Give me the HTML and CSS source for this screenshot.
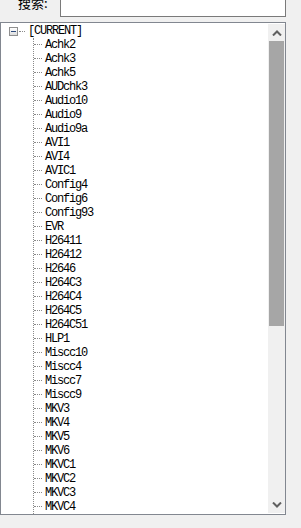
FILE: index.html
```html
<!DOCTYPE html>
<html>
<head>
<meta charset="utf-8">
<link rel="stylesheet" href="styles.css">
</head>
<body>
<div class="page">
  <div class="searchbar">
    <span class="search-label">搜索:</span>
    <div class="search-input"></div>
  </div>
  <div class="tree">
    <div class="tree-content">
      <div class="root-row">
        <span class="expander"><span class="minus"></span></span>
        <span class="hdot root-dot"></span>
        <span class="label">[CURRENT]</span>
      </div>
      <ul class="children">
        <li><span class="hdot"></span>Achk2</li>
        <li><span class="hdot"></span>Achk3</li>
        <li><span class="hdot"></span>Achk5</li>
        <li><span class="hdot"></span>AUDchk3</li>
        <li><span class="hdot"></span>Audio10</li>
        <li><span class="hdot"></span>Audio9</li>
        <li><span class="hdot"></span>Audio9a</li>
        <li><span class="hdot"></span>AVI1</li>
        <li><span class="hdot"></span>AVI4</li>
        <li><span class="hdot"></span>AVIC1</li>
        <li><span class="hdot"></span>Config4</li>
        <li><span class="hdot"></span>Config6</li>
        <li><span class="hdot"></span>Config93</li>
        <li><span class="hdot"></span>EVR</li>
        <li><span class="hdot"></span>H26411</li>
        <li><span class="hdot"></span>H26412</li>
        <li><span class="hdot"></span>H2646</li>
        <li><span class="hdot"></span>H264C3</li>
        <li><span class="hdot"></span>H264C4</li>
        <li><span class="hdot"></span>H264C5</li>
        <li><span class="hdot"></span>H264C51</li>
        <li><span class="hdot"></span>HLP1</li>
        <li><span class="hdot"></span>Miscc10</li>
        <li><span class="hdot"></span>Miscc4</li>
        <li><span class="hdot"></span>Miscc7</li>
        <li><span class="hdot"></span>Miscc9</li>
        <li><span class="hdot"></span>MKV3</li>
        <li><span class="hdot"></span>MKV4</li>
        <li><span class="hdot"></span>MKV5</li>
        <li><span class="hdot"></span>MKV6</li>
        <li><span class="hdot"></span>MKVC1</li>
        <li><span class="hdot"></span>MKVC2</li>
        <li><span class="hdot"></span>MKVC3</li>
        <li><span class="hdot"></span>MKVC4</li>
        <li><span class="hdot"></span>MPAC1</li>
      </ul>
    </div>
    <div class="scrollbar">
      <div class="sb-btn">
        <svg width="10" height="6" viewBox="0 0 10 6"><path d="M1 5.5 L5 1.5 L9 5.5" fill="none" stroke="#606060" stroke-width="2"/></svg>
      </div>
      <div class="sb-track">
        <div class="sb-thumb"></div>
      </div>
      <div class="sb-btn">
        <svg width="10" height="6" viewBox="0 0 10 6"><path d="M1 0.5 L5 4.5 L9 0.5" fill="none" stroke="#606060" stroke-width="2"/></svg>
      </div>
    </div>
  </div>
</div>
</body>
</html>
```
FILE: styles.css
```css
html, body {
  margin: 0;
  padding: 0;
  background: #f0f0f0;
  overflow: hidden;
}
.page {
  width: 301px;
  height: 528px;
  overflow: hidden;
  font-family: "Liberation Mono", monospace;
}
.searchbar {
  display: flex;
  align-items: flex-end;
  margin-top: -8px;
  height: 25px;
  width: 286px;
}
.search-label {
  font-family: "Noto Sans CJK SC", sans-serif;
  font-size: 13px;
  line-height: 14px;
  color: #000;
  width: 42px;
  padding-left: 18px;
  align-self: flex-start;
  margin-top: 4px;
}
.search-input {
  flex: 1;
  height: 24px;
  background: #fff;
  border: 1px solid #7a7a7a;
  border-top: none;
  box-sizing: border-box;
}
.tree {
  margin-top: 5px;
  width: 286px;
  height: 493px;
  box-sizing: border-box;
  border: 1px solid #828790;
  background: #fff;
  display: flex;
}
.tree-content {
  flex: 1;
  overflow: hidden;
  padding-top: 1px;
}
.root-row {
  display: flex;
  align-items: center;
  height: 14px;
  font-size: 12px;
  letter-spacing: -1.2px;
}
.expander {
  width: 9px;
  height: 9px;
  box-sizing: border-box;
  border: 1px solid #8f8f8f;
  background: linear-gradient(#ffffff, #dcdcdc);
  margin-left: 8px;
  display: flex;
  align-items: center;
  justify-content: center;
}
.minus {
  width: 5px;
  height: 1px;
  background: #2c4a7c;
}
.hdot {
  display: inline-block;
  width: 8px;
  height: 0;
  border-top: 1px dotted #8a8a8a;
  vertical-align: middle;
  margin-right: 3px;
}
.root-dot {
  width: 6px;
  margin-left: 1px;
  margin-right: 3px;
}
.label {
  color: #000;
}
.children {
  list-style: none;
  margin: 0 0 0 32px;
  padding: 0;
  border-left: 1px dotted #8a8a8a;
}
.children li {
  height: 14px;
  line-height: 14px;
  font-size: 12px;
  letter-spacing: -1.2px;
  color: #000;
  white-space: nowrap;
}
.scrollbar {
  width: 17px;
  background: #f0f0f0;
  display: flex;
  flex-direction: column;
  margin-top: 1px;
  margin-bottom: 1px;
}
.sb-btn {
  height: 17px;
  display: flex;
  align-items: center;
  justify-content: center;
}
.sb-track {
  flex: 1;
  display: flex;
  flex-direction: column;
}
.sb-thumb {
  height: 285px;
  margin: 0 1px;
  background: #a6a6a6;
}
```
